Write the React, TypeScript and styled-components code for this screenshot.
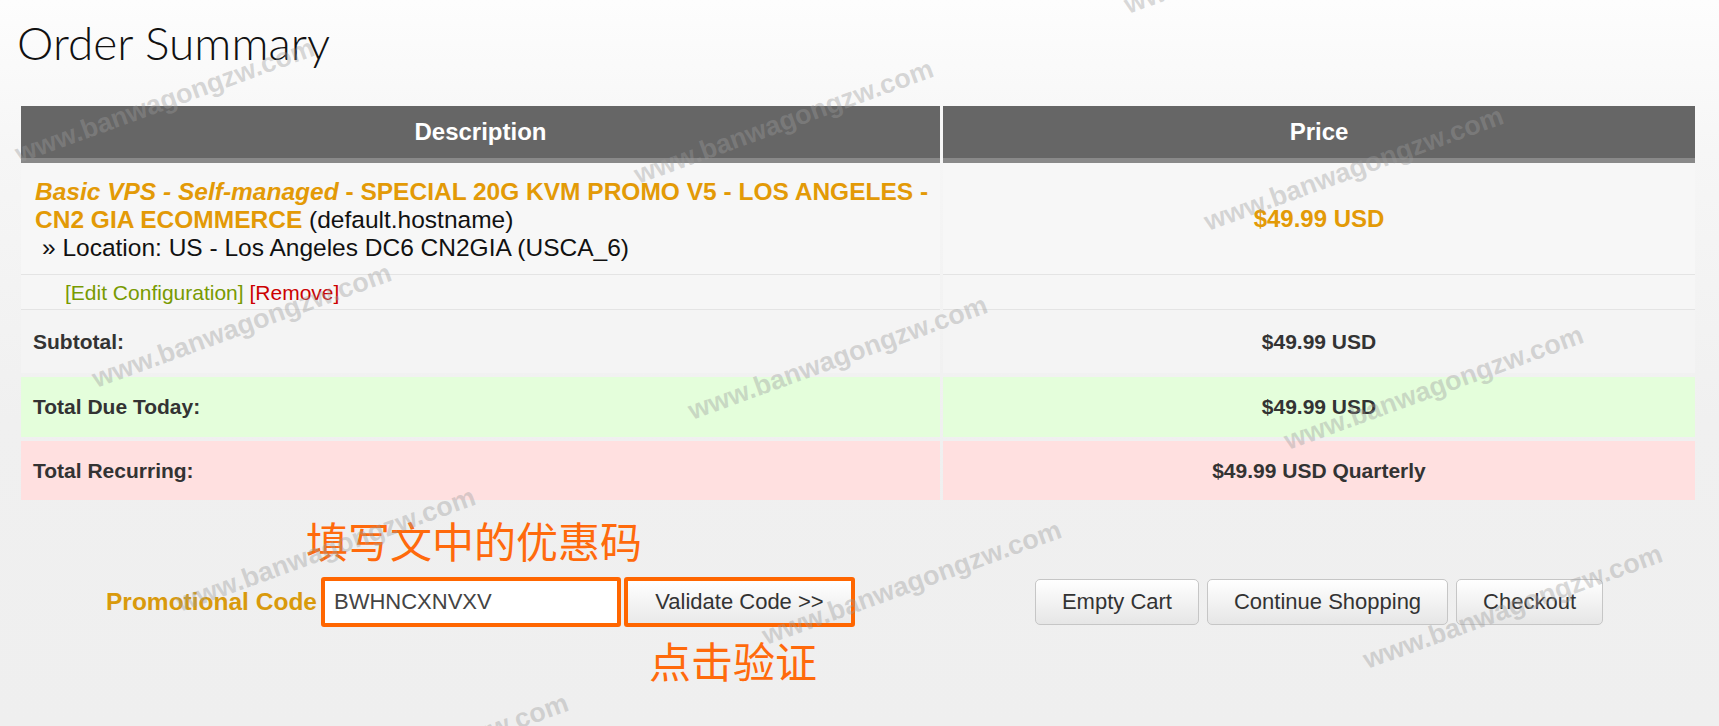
import React from 'react'
import styled, { createGlobalStyle } from 'styled-components'

const GlobalStyle = createGlobalStyle`
  html, body {
    margin: 0;
    padding: 0;
  }
  body {
    background: linear-gradient(#fdfdfd 0px, #f6f6f6 150px, #f0f0f0 420px, #efefef 726px);
    font-family: "Liberation Sans", Arial, sans-serif;
    color: #333;
  }
`

const marks: [number, number][] = [
  [1129, 16],
  [20, 165],
  [639, 186],
  [1209, 233],
  [97, 390],
  [693, 422],
  [1289, 452],
  [181, 614],
  [767, 647],
  [1368, 671],
  [274, 820],
]

const App: React.FC = () => {
  return (
    <Page>
      <GlobalStyle />
      <Heading>Order Summary</Heading>

      <Grid>
        <HeadCell>Description</HeadCell>
        <HeadCell>Price</HeadCell>

        <ItemCell>
          <ProductName>
            <em>Basic VPS - Self-managed</em> - SPECIAL 20G KVM PROMO V5 - LOS ANGELES - CN2 GIA ECOMMERCE
          </ProductName>{' '}
          <span>(default.hostname)</span>
          <Location>» Location: US - Los Angeles DC6 CN2GIA (USCA_6)</Location>
        </ItemCell>
        <PriceCell>$49.99 USD</PriceCell>

        <EditCell>
          <EditLink>[Edit Configuration]</EditLink> <RemoveLink>[Remove]</RemoveLink>
        </EditCell>
        <EditCell />

        <TotalLabel $tone="plain" $h={63}>Subtotal:</TotalLabel>
        <TotalValue $tone="plain" $h={63}>$49.99 USD</TotalValue>

        <TotalLabel $tone="green" $h={60} $space>Total Due Today:</TotalLabel>
        <TotalValue $tone="green" $h={60} $space>$49.99 USD</TotalValue>

        <TotalLabel $tone="red" $h={59} $space>Total Recurring:</TotalLabel>
        <TotalValue $tone="red" $h={59} $space>$49.99 USD Quarterly</TotalValue>
      </Grid>

      <Actions>
        <PromoForm>
          <Note>填写文中的优惠码</Note>
          <PromoLabel>Promotional Code</PromoLabel>
          <CodeInput defaultValue="BWHNCXNVXV" />
          <ValidateButton>Validate Code &gt;&gt;</ValidateButton>
          <NoteBelow>点击验证</NoteBelow>
        </PromoForm>
        <CartButtons>
          <GreyButton>Empty Cart</GreyButton>
          <GreyButton>Continue Shopping</GreyButton>
          <GreyButton>Checkout</GreyButton>
        </CartButtons>
      </Actions>

      {marks.map(([x, y], i) => (
        <Watermark key={i} style={{ left: x, top: y - 24 }}>
          www.banwagongzw.com
        </Watermark>
      ))}
    </Page>
  )
}

export default App

const tones: Record<string, string> = {
  plain: '#f4f4f4',
  green: '#e4fedb',
  red: '#ffe0e0',
}

const Page = styled.div`
  position: relative;
  height: 726px;
  overflow: hidden;
  padding: 0 24px 0 21px;
  box-sizing: border-box;
`

const Heading = styled.h1`
  margin: 0 0 35px -4px;
  padding-top: 15px;
  font-family: Lato, "Open Sans", sans-serif;
  font-weight: 300;
  font-size: 46px;
  line-height: 56px;
  color: #111;
`

const Grid = styled.div`
  display: grid;
  grid-template-columns: 919px 752px;
  column-gap: 3px;
`

const HeadCell = styled.div`
  height: 52px;
  background: #666666;
  border-bottom: 5px solid #898989;
  display: flex;
  justify-content: center;
  align-items: center;
  color: #fff;
  font-weight: bold;
  font-size: 24px;
`

const ItemCell = styled.div`
  background: #f7f7f7;
  border-bottom: 1px solid #e4e4e4;
  padding: 15px 3px 12px 14px;
  font-size: 24.5px;
  line-height: 28px;
  color: #111;
`

const ProductName = styled.span`
  color: #e39a06;
  font-weight: bold;
`

const Location = styled.div`
  padding-left: 7px;
`

const PriceCell = styled.div`
  background: #f7f7f7;
  border-bottom: 1px solid #e4e4e4;
  display: flex;
  justify-content: center;
  align-items: center;
  color: #e39a06;
  font-weight: bold;
  font-size: 24px;
`

const EditCell = styled.div`
  background: #f6f6f6;
  border-bottom: 1px solid #e4e4e4;
  height: 24px;
  padding: 6px 0 4px 44px;
  font-size: 21px;
  line-height: 24px;
`

const EditLink = styled.span`
  color: #789a01;
`

const RemoveLink = styled.span`
  color: #cc0000;
`

const TotalLabel = styled.div<{ $tone: string; $h: number; $space?: boolean }>`
  height: ${(p) => p.$h}px;
  margin-top: ${(p) => (p.$space ? 4 : 0)}px;
  background: ${(p) => tones[p.$tone]};
  display: flex;
  align-items: center;
  padding-left: 12px;
  font-weight: bold;
  font-size: 21px;
  color: #333;
`

const TotalValue = styled(TotalLabel)`
  justify-content: center;
  padding-left: 0;
`

const Actions = styled.div`
  display: grid;
  grid-template-columns: 919px 752px;
  column-gap: 3px;
`

const PromoForm = styled.div`
  display: grid;
  grid-template-columns: auto 300px 231px;
  justify-content: center;
  align-items: center;
  column-gap: 3px;
  padding-top: 19px;
`

const Note = styled.div`
  grid-column: 2 / span 2;
  justify-self: start;
  margin-left: -15px;
  margin-bottom: 16px;
  font-family: "Noto Sans CJK SC", "Noto Sans", sans-serif;
  font-size: 42px;
  line-height: 42px;
  color: #ff6a0c;
`

const NoteBelow = styled(Note)`
  grid-column: 3;
  justify-self: center;
  margin: 12px 0 0 -13px;
`

const PromoLabel = styled.label`
  margin-right: 1px;
  color: #d99a0c;
  font-weight: bold;
  font-size: 24.5px;
  white-space: nowrap;
`

const CodeInput = styled.input`
  box-sizing: border-box;
  width: 300px;
  height: 50px;
  border: 4px solid #ff6600;
  border-radius: 3px;
  background: #fff;
  padding: 0 0 0 9px;
  font-family: "Liberation Sans", Arial, sans-serif;
  font-size: 22px;
  color: #444;
  outline: none;
`

const ValidateButton = styled.button`
  box-sizing: border-box;
  height: 50px;
  border: 4px solid #ff6600;
  border-radius: 3px;
  background: linear-gradient(#ffffff, #e9e9e9);
  font-family: "Liberation Sans", Arial, sans-serif;
  font-size: 22px;
  color: #333;
  padding: 0;
`

const CartButtons = styled.div`
  display: flex;
  justify-content: center;
  align-items: flex-start;
  gap: 8px;
  padding-top: 79px;
`

const GreyButton = styled.button`
  height: 46px;
  padding: 0 26px;
  border: 1px solid #c6c6c6;
  border-radius: 5px;
  background: linear-gradient(#ffffff, #e6e6e6);
  font-family: "Liberation Sans", Arial, sans-serif;
  font-size: 22px;
  color: #333;
`

const Watermark = styled.span`
  position: absolute;
  font-family: "Liberation Sans", Arial, sans-serif;
  font-weight: bold;
  font-size: 27px;
  line-height: 1;
  color: rgba(155, 155, 155, 0.38);
  white-space: nowrap;
  transform-origin: 0 24px;
  transform: rotate(-20deg);
  pointer-events: none;
`
